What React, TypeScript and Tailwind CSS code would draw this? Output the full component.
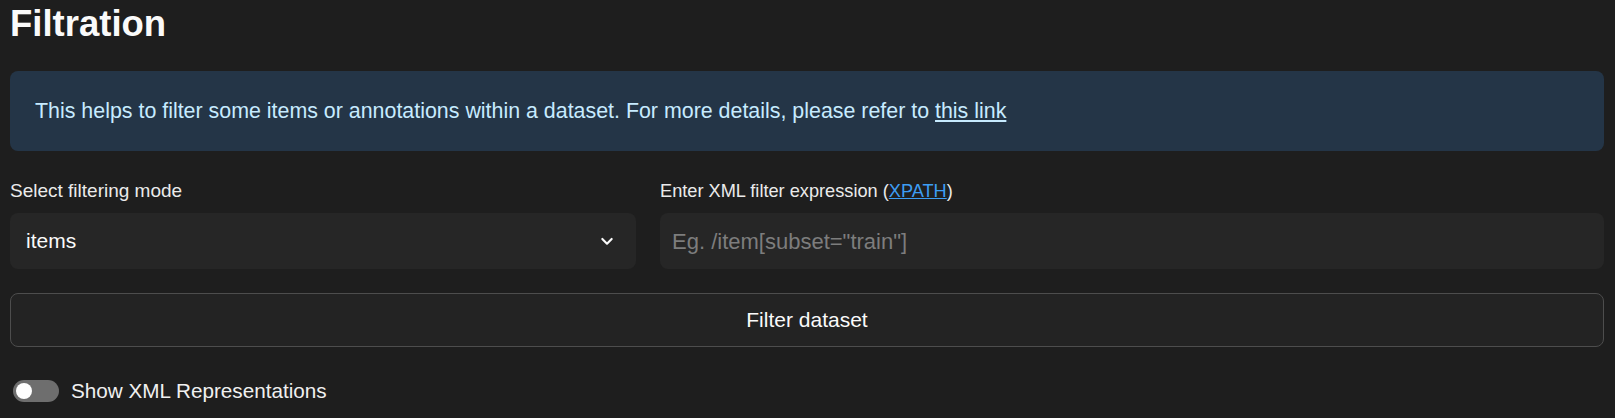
import React from 'react';

function ChevronDown() {
  return (
    <svg width="16" height="16" viewBox="0 0 24 24" fill="none" stroke="currentColor" strokeWidth="3.2" strokeLinecap="round" strokeLinejoin="round">
      <path d="M5 9l7 7 7-7" />
    </svg>
  );
}

function Toggle({ label }: { label: string }) {
  return (
    <div className="flex items-center gap-[12px] pl-[3px]">
      <div className="w-[46px] h-[22px] rounded-full bg-[#6e6e6e] flex items-center px-[3px]">
        <div className="w-[16px] h-[16px] rounded-full bg-white" />
      </div>
      <span className="text-[20.7px] text-[#f0f0f0]">{label}</span>
    </div>
  );
}

export default function App() {
  return (
    <div className="min-h-[418px] bg-[#1e1e1e] pl-[10px] pr-[11px] font-['Liberation_Sans',Arial,sans-serif]">
      <h2 className="pt-[2px] text-[36.5px] leading-[44px] font-bold text-[#fafafa]">Filtration</h2>

      <div className="mt-[25px] h-[80px] rounded-[8px] bg-[#243547] flex items-center pl-[25px]">
        <p className="text-[21.4px] text-[#c7ebff]">
          This helps to filter some items or annotations within a dataset. For more details, please refer to{' '}
          <a className="underline">this link</a>
        </p>
      </div>

      <div className="mt-[28px] flex gap-[24px]">
        <div className="w-[626px] flex flex-col">
          <label className="text-[19px] leading-[24px] text-[#ebebeb]">Select filtering mode</label>
          <div className="mt-[10px] h-[56px] rounded-[8px] bg-[#262626] flex items-center justify-between pl-[16px] pr-[21px] text-[#fafafa]">
            <span className="text-[21px]">items</span>
            <ChevronDown />
          </div>
        </div>
        <div className="flex-1 flex flex-col">
          <label className="text-[18.2px] leading-[24px] text-[#ebebeb]">
            Enter XML filter expression (<a className="underline text-[#3d9df3]">XPATH</a>)
          </label>
          <div className="mt-[10px] h-[56px] rounded-[8px] bg-[#262626] flex items-center pl-[12px]">
            <span className="text-[22px] text-[#7d7d7d]">Eg. /item[subset="train"]</span>
          </div>
        </div>
      </div>

      <div className="mt-[24px] h-[54px] rounded-[8px] border border-[#4d4d4d] bg-[#232323] flex items-center justify-center text-[21px] text-[#fafafa]">
        Filter dataset
      </div>

      <div className="mt-[28px]">
        <Toggle label="Show XML Representations" />
      </div>
    </div>
  );
}
